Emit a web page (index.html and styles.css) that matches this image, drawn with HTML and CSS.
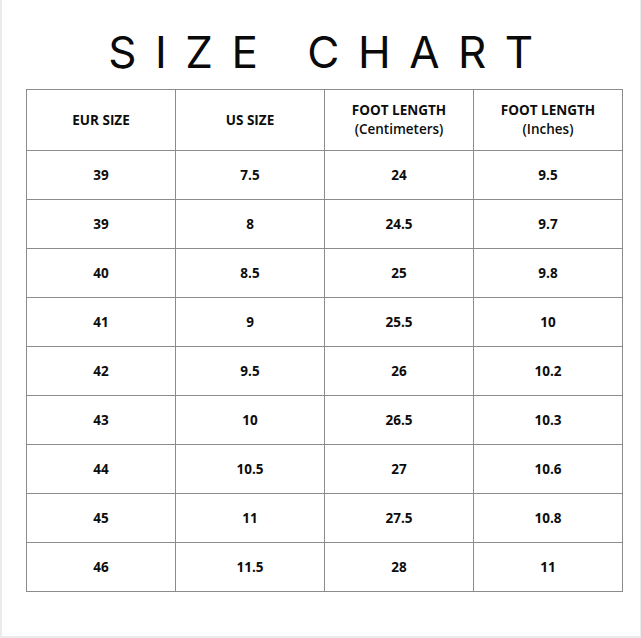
FILE: index.html
```html
<!DOCTYPE html>
<html>
<head>
<meta charset="utf-8">
<link rel="stylesheet" href="styles.css">
</head>
<body>
<div class="page">
  <h1 class="title">SIZE CHART</h1>
  <table class="chart">
    <thead>
      <tr>
        <th>EUR SIZE</th>
        <th>US SIZE</th>
        <th>FOOT LENGTH<br><span class="unit">(Centimeters)</span></th>
        <th>FOOT LENGTH<br><span class="unit">(Inches)</span></th>
      </tr>
    </thead>
    <tbody>
      <tr><td>39</td><td>7.5</td><td>24</td><td>9.5</td></tr>
      <tr><td>39</td><td>8</td><td>24.5</td><td>9.7</td></tr>
      <tr><td>40</td><td>8.5</td><td>25</td><td>9.8</td></tr>
      <tr><td>41</td><td>9</td><td>25.5</td><td>10</td></tr>
      <tr><td>42</td><td>9.5</td><td>26</td><td>10.2</td></tr>
      <tr><td>43</td><td>10</td><td>26.5</td><td>10.3</td></tr>
      <tr><td>44</td><td>10.5</td><td>27</td><td>10.6</td></tr>
      <tr><td>45</td><td>11</td><td>27.5</td><td>10.8</td></tr>
      <tr><td>46</td><td>11.5</td><td>28</td><td>11</td></tr>
    </tbody>
  </table>
</div>
</body>
</html>
```
FILE: styles.css
```css
html, body {
  margin: 0;
  padding: 0;
}
body {
  background: #e9ebee;
  width: 641px;
  height: 638px;
  overflow: hidden;
}
.page {
  background: #ffffff;
  margin-left: 2px;
  width: 638px;
  height: 636px;
  box-sizing: border-box;
  overflow: hidden;
}
.title {
  margin: 0;
  height: 89px;
  box-sizing: border-box;
  padding-top: 25px;
  padding-left: 18px;
  text-align: center;
  font-family: "Inter", "Liberation Sans", sans-serif;
  font-weight: 400;
  font-size: 44px;
  line-height: 54px;
  letter-spacing: 18.5px;
  color: #0a0a0a;
}
.chart {
  margin-left: 24px;
  border-collapse: collapse;
  table-layout: fixed;
  width: 597px;
  font-family: "Open Sans", "Liberation Sans", sans-serif;
  font-weight: 700;
  font-size: 13.5px;
  color: #0d0d0d;
}
.chart th, .chart td {
  border: 1px solid #8c8c8c;
  text-align: center;
  vertical-align: middle;
  padding: 0;
}
.chart th {
  height: 60px;
  line-height: 19px;
  font-weight: 700;
}
.chart .unit {
  font-weight: 600;
}
.chart td {
  height: 48px;
}
```
